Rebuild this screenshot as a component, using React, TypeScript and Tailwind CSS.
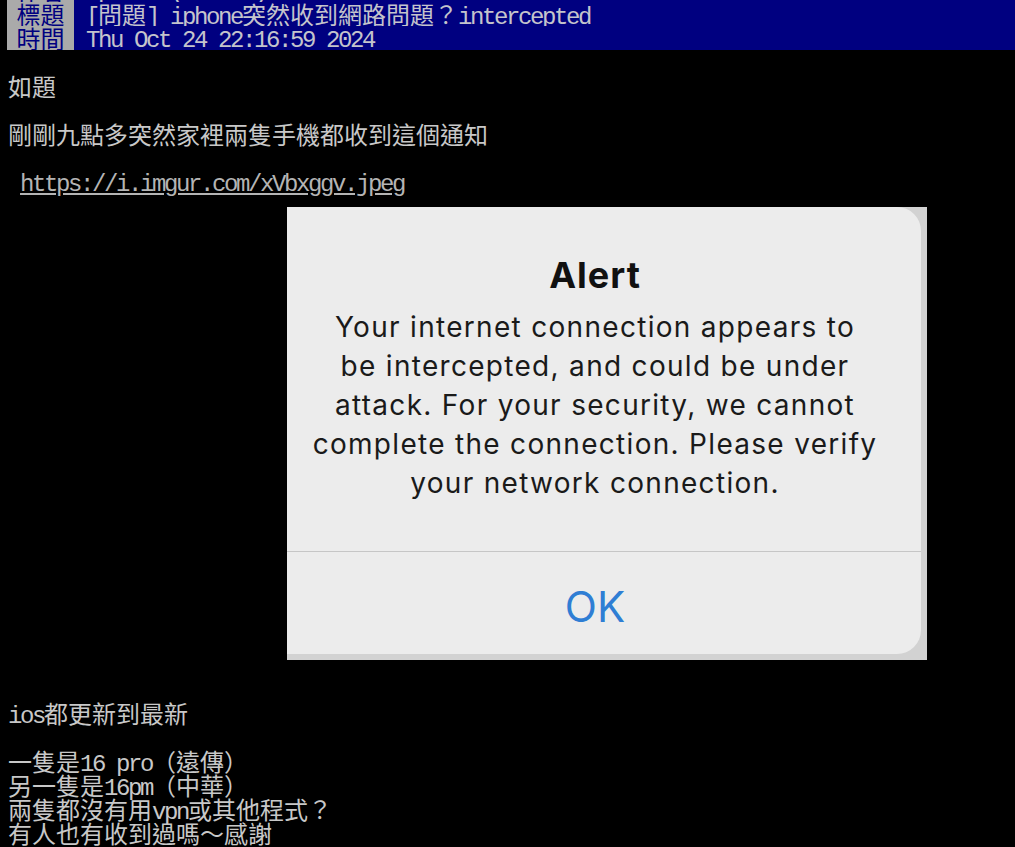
import React from "react";

const ASCII = /^[\x20-\x7E]+$/;

function T({ s }: { s: string }) {
  const parts = s.split(/([\x20-\x7E]+)/).filter(Boolean);
  return (
    <>
      {parts.map((p, i) =>
        ASCII.test(p) ? (
          <span
            key={i}
            className="font-['Liberation_Mono',monospace] tracking-[-2.4px] whitespace-pre"
          >
            {p}
          </span>
        ) : (
          <span key={i} className="font-['Noto_Sans_CJK_TC',sans-serif]">
            {p}
          </span>
        )
      )}
    </>
  );
}

function MetaRow({ tag, value }: { tag: string; value: string }) {
  return (
    <div className="flex h-[24px] leading-[24px]">
      <div className="w-[7px] bg-black" />
      <div className="w-[67px] bg-[#aaaaaa] text-[#000080] text-center font-['Noto_Sans_CJK_TC',sans-serif]">
        {tag}
      </div>
      <div className="flex-1 bg-[#000080] text-[#c4c4cc] pl-[12px] whitespace-pre">
        <T s={value} />
      </div>
    </div>
  );
}

function Line({ s, className = "" }: { s?: string; className?: string }) {
  return (
    <div className={"h-[24px] leading-[24px] whitespace-pre " + className}>
      {s ? <T s={s} /> : null}
    </div>
  );
}

export default function App() {
  return (
    <div className="w-[1015px] h-[847px] bg-black overflow-hidden text-[24px] text-[#c8c8c8]">
      <div className="h-[50px] overflow-hidden">
        <div className="-mt-[22px]">
          <MetaRow tag="作者" value="iphone (iPhone)" />
          <MetaRow tag="標題" value="[問題] iphone突然收到網路問題？intercepted" />
          <MetaRow tag="時間" value="Thu Oct 24 22:16:59 2024" />
        </div>
      </div>
      <div className="px-[8px]">
        <Line />
        <Line s="如題" />
        <Line />
        <Line s="剛剛九點多突然家裡兩隻手機都收到這個通知" />
        <Line />
        <div className="h-[24px] leading-[24px] whitespace-pre">
          <span className="font-['Liberation_Mono',monospace] tracking-[-2.4px]"> </span>
          <a className="underline text-[#b4b4b4] font-['Liberation_Mono',monospace] tracking-[-2.4px]">
            https://i.imgur.com/xVbxggv.jpeg
          </a>
        </div>
        <div className="ml-[279px] mt-[13px] w-[640px] h-[453px] bg-[#d2d2d2]">
          <div className="w-[634px] h-[447px] bg-[#ececec] rounded-tr-[24px] rounded-br-[24px] flex flex-col font-['Inter',sans-serif]">
            <div className="h-[344px] flex flex-col items-center pr-[18px] pt-[50px]">
              <div className="text-[36px] leading-[36px] font-bold tracking-[1px] text-[#111111]">Alert</div>
              <div className="mt-[15px] text-[28px] leading-[39px] tracking-[1.3px] text-[#1a1a1a] text-center whitespace-nowrap">
                Your internet connection appears to
                <br />
                be intercepted, and could be under
                <br />
                attack. For your security, we cannot
                <br />
                complete the connection. Please verify
                <br />
                your network connection.
              </div>
            </div>
            <div className="h-px bg-[#c6c6c6]" />
            <div className="flex-1 flex items-center justify-center pr-[18px] pt-[6px] text-[42px] text-[#2f7ed4]">
              OK
            </div>
          </div>
        </div>
        <div className="mt-[41px]">
          <Line s="ios都更新到最新" />
          <Line />
          <Line s="一隻是16 pro（遠傳）" />
          <Line s="另一隻是16pm（中華）" />
          <Line s="兩隻都沒有用vpn或其他程式？" />
          <Line s="有人也有收到過嗎～感謝" />
        </div>
      </div>
    </div>
  );
}
